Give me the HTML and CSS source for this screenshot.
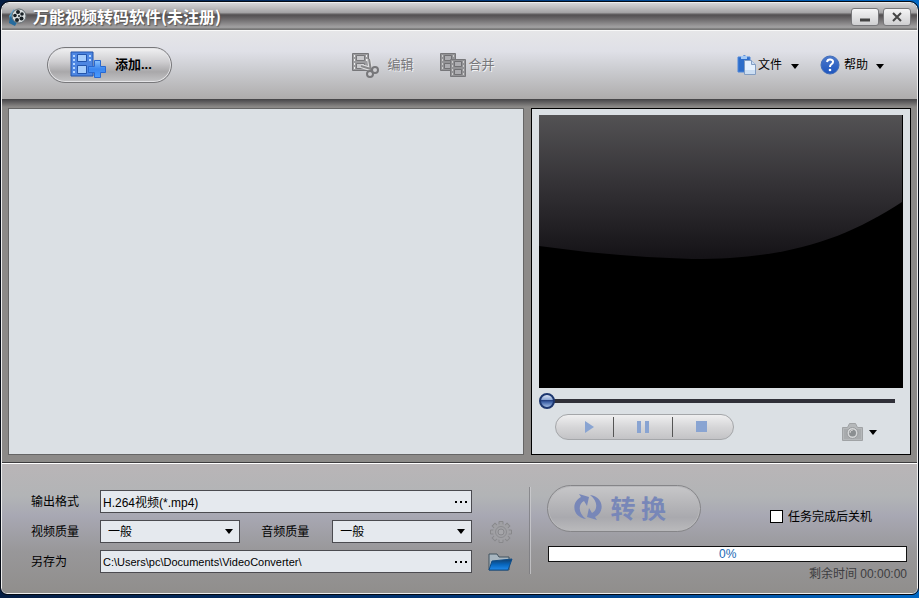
FILE: index.html
```
<!DOCTYPE html>
<html lang="zh-CN">
<head>
<meta charset="utf-8">
<title>万能视频转码软件</title>
<link rel="stylesheet" href="styles.css">
</head>
<body>
<div class="window">
  <header class="titlebar">
    <svg class="app-icon" width="18" height="18" viewBox="0 0 18 18" aria-hidden="true">
      <path d="M5 1L0 8l2 6 4 3 3-3z" fill="#55a3cf"/><path d="M1 8l-1 7 6 3 2-4z" fill="#256b9d"/>
      <circle cx="10" cy="8" r="7" fill="#d8dddf" stroke="#626b70"/>
      <g fill="#182025"><circle cx="9" cy="4" r="2"/><circle cx="13" cy="6" r="1.8"/><circle cx="6" cy="7.500" r="1.800"/><circle cx="12.500" cy="10.500" r="2"/><circle cx="8" cy="12" r="2"/><circle cx="10" cy="8" r="1"/></g>
    </svg>
    <h1 class="title">万能视频转码软件(未注册)</h1>
    <button class="win-button" type="button" aria-label="最小化"><svg width="12" height="12" viewBox="0 0 12 12"><path d="M1 7.500h10v3H1z" fill="#444"/></svg></button>
    <button class="win-button" type="button" aria-label="关闭"><svg width="12" height="12" viewBox="0 0 12 12"><path d="M2 2l8 8M10 2l-8 8" stroke="#444" stroke-width="2"/></svg></button>
  </header>

  <nav class="toolbar">
    <button class="pill add" type="button">
      <svg width="37" height="28" viewBox="0 0 37 28" aria-hidden="true">
        <defs><linearGradient id="plus" x2="0" y2="1"><stop stop-color="#8bc4ff"/><stop offset=".5" stop-color="#3b86ef"/><stop offset="1" stop-color="#4a9bff"/></linearGradient></defs>
        <path d="M1 1h22v24H1z" fill="#4d86e2" stroke="#2355ac"/>
        <g fill="#a5ccfb" stroke="#2355ac"><path d="M7.500 3.500h9v7h-9zM7.500 14.500h9v8h-9z"/></g>
        <g fill="#b5d6ff"><path d="M3 4h2v2H3zM3 8h2v2H3zM3 12h2v2H3zM3 16h2v2H3zM3 20h2v2H3zM19 4h2v2h-2zM19 8h2v2h-2z"/></g>
        <path d="M24.500 9.500h6v6h5v6h-5v5h-6v-5h-6v-6h6z" fill="url(#plus)" stroke="#2868d0"/>
      </svg>
      <span>添加...</span>
    </button>
    <div class="edit-tools">
      <button class="tool disabled" type="button" disabled>
        <svg width="28" height="26" viewBox="0 0 28 26" aria-hidden="true">
          <path d="M1.500 1.500h16v17h-16z" fill="#9c9c9f" stroke="#77777a"/>
          <g fill="#c8c8cb" stroke="#77777a"><path d="M5.500 3.500h8v5h-8zM5.500 11.500h8v5h-8z"/></g>
          <path d="M3 3h1v2H3zM3 7h1v2H3zM3 11h1v2H3zM3 15h1v2H3zM15 3h1v2h-1zM15 7h1v2h-1z" fill="#eee"/>
          <path d="M18 7l2 12M10 14l13 4" stroke="#e2e2e4" stroke-width="4"/><path d="M18 7l2 12M10 14l13 4" stroke="#88888a" stroke-width="2"/>
          <g fill="#cfcfd2" stroke="#77777a" stroke-width="2"><circle cx="19" cy="22" r="3"/><circle cx="24" cy="18" r="3"/></g>
        </svg>
        <span>编辑</span>
      </button>
      <button class="tool disabled merge" type="button" disabled>
        <svg width="27" height="26" viewBox="0 0 27 26" aria-hidden="true">
          <g id="film"><path d="M.5 1.500h15v17H.5z" fill="#939396" stroke="#77777a"/><path d="M4.500 3.500h7v5h-7zM4.500 11.500h7v5h-7z" fill="#acacb0" stroke="#717174"/><path d="M2 3h1v2H2zM2 7h1v2H2zM2 11h1v2H2zM2 15h1v2H2zM13 3h1v2h-1zM13 7h1v2h-1zM13 11h1v2h-1zM13 15h1v2h-1z" fill="#ccc"/></g>
          <use href="#film" x="10" y="6"/>
        </svg>
        <span>合并</span>
      </button>
    </div>
    <div class="menus">
      <button class="tool" type="button">
        <svg width="20" height="21" viewBox="0 0 20 21" aria-hidden="true">
          <path d="M1 2h4q2-3 5 0h3v15H1z" fill="#2d6dca" stroke="#4c86da"/><path d="M4 1h6v3H4z" fill="#a4c9f5"/>
          <path d="M7.500 5.500h7l4 4v10h-11z" fill="#e6f1fe" stroke="#829dc2"/><path d="M14.500 5.500v4h4" fill="#cadcf3" stroke="#829dc2"/><path d="M8 15h10v4H8z" fill="#ccdef2"/>
        </svg>
        <span>文件</span><i class="caret"></i>
      </button>
      <button class="tool help" type="button">
        <svg width="20" height="20" viewBox="0 0 20 20" aria-hidden="true">
          <defs><linearGradient id="blue" x2="0" y2="1"><stop stop-color="#4d79ca"/><stop offset="1" stop-color="#1d55bf"/></linearGradient></defs>
          <circle cx="10" cy="10" r="9" fill="url(#blue)" stroke="#416db9"/><path d="M7 7q.5-3 3.500-2.500c4 .8 2.500 4 .7 4.800q-1.200.7-1.200 2.700" fill="none" stroke="#fff" stroke-width="2"/><circle cx="10" cy="15" r="1.300" fill="#fff"/>
        </svg>
        <span>帮助</span><i class="caret"></i>
      </button>
    </div>
  </nav>

  <main class="workspace">
    <section class="file-list" aria-label="文件列表"></section>
    <section class="preview" aria-label="预览">
      <svg class="screen" viewBox="0 0 364 273" preserveAspectRatio="none" aria-hidden="true">
        <defs><linearGradient id="gloss" x2="0" y2="1"><stop stop-color="#535254"/><stop offset=".5" stop-color="#333135"/><stop offset="1" stop-color="#141216"/></linearGradient></defs>
        <path d="M0 0h364v273H0z" fill="#000"/><path d="M0 0h363v87C306 124 250 144 153 144Q77 142 0 131z" fill="url(#gloss)"/>
      </svg>
      <input class="seek" type="range" min="0" max="100" value="0" aria-label="播放进度">
      <div class="playback">
        <div class="transport">
          <button type="button" aria-label="播放"><svg width="12" height="12" viewBox="0 0 12 12"><path d="M2 0l9 6-9 6z"/></svg></button>
          <button type="button" aria-label="暂停"><svg width="12" height="12" viewBox="0 0 12 12"><path d="M0 0h4v12H0zM8 0h4v12H8z"/></svg></button>
          <button type="button" aria-label="停止"><svg width="12" height="12" viewBox="0 0 12 12"><path d="M1 0h11v11H1z"/></svg></button>
        </div>
        <button class="snapshot" type="button" aria-label="截图">
          <svg width="21" height="18" viewBox="0 0 21 18"><path d="M.5 4.500h5l2-4h6l2 4h5v13H.5z" fill="#b5b8ba" stroke="#a0a3a5"/><path d="M2 6h17v10H2z" fill="#a8abad"/><circle cx="10.500" cy="10" r="5.500" fill="#d4d6d7" stroke="#9a9d9f"/><circle cx="10.500" cy="10" r="3.500" fill="#8b8f91"/><path d="M8 10q0-3 3-3" stroke="#ccc" fill="none"/></svg>
          <i class="caret"></i>
        </button>
      </div>
    </section>
  </main>

  <footer class="settings">
    <form class="options">
      <label for="format">输出格式</label>
      <div class="field wide"><input id="format" type="text" value="H.264视频(*.mp4)"><button type="button" aria-label="选择格式"><svg width="12" height="2" viewBox="0 0 12 2"><path d="M0 0h2v2H0zM5 0h2v2H5zM10 0h2v2h-2z"/></svg></button></div>
      <label class="row-label" for="video">视频质量</label>
      <div class="field"><select id="video"><option>一般</option></select><i class="caret"></i></div>
      <label class="audio-label" for="audio">音频质量</label>
      <div class="field"><select id="audio"><option>一般</option></select><i class="caret"></i></div>
      <button class="icon-button" type="button" aria-label="高级设置">
        <svg width="24" height="24" viewBox="-12 -12 24 24"><g fill="#a0a0a4" stroke="#88888b"><g id="teeth"><path d="M-2-10.500h4v21h-4zM-10.500-2h21v4h-21z"/></g><use href="#teeth" transform="rotate(45)"/></g><circle r="8" fill="#a0a0a4"/><circle r="5.500" fill="none" stroke="#8c8c90"/><circle r="3" fill="#a6a6aa" stroke="#88888c"/></svg>
      </button>
      <label class="row-label" for="path">另存为</label>
      <div class="field wide path"><input id="path" type="text" value="C:\Users\pc\Documents\VideoConverter\"><button type="button" aria-label="浏览"><svg width="12" height="2" viewBox="0 0 12 2"><path d="M0 0h2v2H0zM5 0h2v2H5zM10 0h2v2h-2z"/></svg></button></div>
      <button class="icon-button" type="button" aria-label="打开文件夹">
        <svg width="25" height="20" viewBox="0 0 25 20"><defs><linearGradient id="folder" x2="0" y2="1"><stop stop-color="#123d68"/><stop offset=".5" stop-color="#0866bd"/><stop offset="1" stop-color="#218bec"/></linearGradient></defs><path d="M1 18V2h8l2 3h10v13z" fill="#a8b6c0" stroke="#41525f"/><path d="M1 18l3-9 20-2-4 11z" fill="url(#folder)" stroke="#104d87"/></svg>
      </button>
    </form>
    <div class="divider"></div>
    <section class="job">
      <div class="start-row">
        <button class="pill convert" type="button" disabled>
          <svg width="28" height="28" viewBox="0 0 28 28" aria-hidden="true"><g id="arc"><path d="M12 26C-2 24-3 9 7 4L5 1l10 3-2 9-3-5C4 11 4 20 12 26z"/></g><use href="#arc" transform="rotate(180 14 14)"/></svg>
          <span>转 换</span>
        </button>
        <label class="shutdown"><input type="checkbox">任务完成后关机</label>
      </div>
      <div class="progress" role="progressbar" aria-label="转换进度" aria-valuenow="0" aria-valuemin="0" aria-valuemax="100">0%</div>
      <p class="remaining">剩余时间 00:00:00</p>
    </section>
  </footer>
</div>
</body>
</html>
```
FILE: styles.css
```
* { box-sizing: border-box; }

body {
  margin: 0;
  min-height: 100vh;
  display: flex;
  padding: 2px 1px 4px;
  background: linear-gradient(90deg, #041d43, #003575 50%, #0067c4);
  color: #000;
  font: 12px/16px "Liberation Sans", "Noto Sans CJK SC", sans-serif;
}

button, input, select { font: inherit; color: inherit; }
button { border: 0; padding: 0; background: none; }
svg { display: block; flex: none; }

.window {
  flex: 1;
  display: flex;
  flex-direction: column;
  border: 1px solid #eee;
  outline: 1px solid #050b15;
  border-radius: 8px 8px 6px 6px;
  background: #8c8a88;
  overflow: hidden;
}

.titlebar {
  height: 28px;
  flex: none;
  display: flex;
  align-items: center;
  padding: 0 6px 0 7px;
  border-bottom: 1px solid #f8f8f8;
  background: linear-gradient(#d5d5d7, #a5a4a6 35%, #524f51 44%, #625f61 54%, #a3a2a3 90%, #777 96%);
}
.title {
  flex: 1;
  margin: 0 0 2px 6px;
  font-size: 16px;
  line-height: 20px;
  font-family: "Noto Sans CJK SC", sans-serif;
  color: #fff;
  text-shadow: 1px 1px 1px #555;
}
.win-button {
  width: 28px;
  height: 18px;
  margin-left: 4px;
  display: grid;
  place-items: center;
  border: 1px solid #77777a;
  border-radius: 3px;
  background: linear-gradient(#f5f5f6, #cfcfd1);
}

.toolbar {
  height: 68px;
  flex: none;
  display: grid;
  grid-template-columns: 304fr auto 389fr;
  align-items: center;
  padding: 0 33px 0 45px;
  background: linear-gradient(#e6e6e8, #dfe0e7 30%, #c9cace 60%, #aeacac);
}
.pill {
  display: flex;
  align-items: center;
  border: 1px solid #77777a;
  border-radius: 24px;
  box-shadow: inset 0 0 0 1px #e4e4e7;
  background: linear-gradient(#f1f1f3, #cfced1 40%, #a9a8aa 70%, #c4c4c6);
}
.add {
  width: 125px;
  height: 36px;
  padding-left: 22px;
  gap: 8px;
  font-size: 13px;
  font-weight: bold;
}
.edit-tools, .menus { display: flex; }
.tool { display: flex; align-items: center; gap: 1px; }
.edit-tools { gap: 27px; }
.edit-tools .tool { gap: 8px; font-size: 13px; }
.edit-tools .merge { gap: 1px; }
.disabled { color: #77777a; text-shadow: 1px 1px #f2f2f4; }
.menus { justify-content: flex-end; gap: 21px; }
.tool.help { gap: 4px; }
.caret {
  flex: none;
  border: 4px solid transparent;
  border-top: 5px solid #000;
  border-bottom: 0;
}
.tool .caret { margin: 2px 0 0 8px; }
.tool.help .caret { margin-left: 4px; }

.workspace {
  flex: 1;
  display: grid;
  grid-template-columns: 516fr 380fr;
  gap: 7px;
  padding: 9px 6px 7px;
  border-bottom: 1px solid #3c3b3d;
  background: linear-gradient(#444346, #8c8a88 8px);
}
.file-list { border: 1px solid #656565; background: #dbe0e4; }
.preview {
  display: flex;
  flex-direction: column;
  padding: 6px 7px 13px;
  border: 1px solid #000;
  background: #dbe0e4;
}
.screen { width: 100%; flex: 1; min-height: 0; }
.seek {
  appearance: none;
  height: 16px;
  margin: 5px 8px 5px 0;
  background: linear-gradient(#303038, #303038) 8px center / 100% 4px no-repeat;
}
.seek::-webkit-slider-thumb {
  appearance: none;
  width: 16px;
  height: 16px;
  border: 2px solid #1d376f;
  border-radius: 50%;
  background: linear-gradient(#dae4f5, #8ba5d2 40%, #233f7f 45%, #4265a9 60%, #a2bce4);
}
.playback { display: flex; justify-content: space-between; padding: 0 26px 0 16px; }
.transport {
  width: 179px;
  height: 26px;
  display: grid;
  grid-template-columns: 57fr 59fr 61fr;
  align-items: center;
  padding: 1px 0;
  border: 1px solid #a4a6a9;
  border-radius: 13px;
  background: linear-gradient(#efeff0, #d6d6d8 50%, #c3c3c6);
}
.transport button { height: 20px; display: grid; place-items: center; fill: #89a4d2; }
.transport button:first-child { padding-left: 8px; }
.transport button:last-child { padding-right: 4px; }
.transport button + button { border-left: 1px solid #555; }
.snapshot { display: flex; align-items: center; gap: 6px; padding-top: 9px; }

.settings {
  flex: none;
  display: grid;
  grid-template-columns: 483fr 2px 360fr;
  column-gap: 16px;
  padding: 21px 10px 11px 29px;
  border-top: 1px solid #fff;
  background: linear-gradient(#b9b5b7, #b2b4b6 25%, #a8a8b3 40%, #989799 68%, #908e8c);
}
.options {
  display: grid;
  grid-template-columns: 69px 140fr 92px 140fr 41px;
  grid-auto-rows: 23px;
  row-gap: 7px;
  align-items: center;
  align-content: start;
  padding-top: 5px;
}
.row-label { grid-column: 1; }
.audio-label { margin-left: 21px; }
.field {
  height: 23px;
  min-width: 0;
  display: flex;
  align-items: center;
  border: 1px solid #4b4b50;
  background: #e5e9ee;
}
.wide { grid-column: 2 / 5; }
.path { font-size: 11px; }
.field input, .field select {
  appearance: none;
  flex: 1;
  min-width: 0;
  height: 21px;
  padding: 0 2px;
  border: 0;
  background: none;
}
.field select { padding: 0 7px; }
.field .caret { margin-right: 6px; }
.field button { padding: 0 4px; }
.icon-button { grid-column: 5; justify-self: end; }
.divider { background: linear-gradient(90deg, #77777c 50%, #d0d0d3 50%); margin: 2px 0 8px; opacity: .7; }
.start-row { display: flex; align-items: center; justify-content: space-between; padding-right: 35px; }
.convert {
  width: 154px;
  height: 47px;
  padding: 0 0 4px 26px;
  gap: 8px;
  color: #7887b8;
  fill: #7887b8;
  font: bold 25px/32px "Noto Sans CJK SC", sans-serif;
  border-color: #858588;
  box-shadow: inset 0 0 0 1px #b8b8bb;
  background: linear-gradient(#c7c7c9, #b6b6b9 40%, #a9a9ae 70%, #bababc);
}
.shutdown { display: flex; align-items: center; gap: 5px; margin-top: 16px; }
.shutdown input {
  appearance: none;
  width: 13px;
  height: 13px;
  margin: 0;
  border: 1px solid #000;
  background: #fff;
}
.progress {
  height: 16px;
  margin: 14px 0 4px 1px;
  border: 1px solid #111;
  background: #fff;
  color: #1768b4;
  line-height: 14px;
  text-align: center;
}
.remaining { margin: 0; text-align: right; color: #3d3d40; }
```
